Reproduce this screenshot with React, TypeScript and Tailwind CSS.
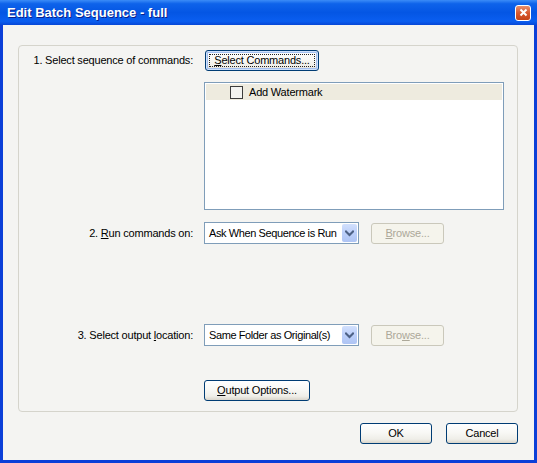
import React from 'react';

const Chevron = () => (
  <svg width="9" height="7" viewBox="0 0 9 7" fill="none">
    <path d="M1 1.5 L4.5 5 L8 1.5" stroke="#4d6185" strokeWidth="2" strokeLinecap="square" />
  </svg>
);

const CloseIcon = () => (
  <svg width="9" height="9" viewBox="0 0 9 9" fill="none">
    <path d="M1.5 1.5 L7.5 7.5 M7.5 1.5 L1.5 7.5" stroke="#ffffff" strokeWidth="2" />
  </svg>
);

const XpButton: React.FC<{ children: React.ReactNode; className?: string; focused?: boolean }> = ({
  children,
  className = '',
  focused = false,
}) => (
  <button
    className={`relative flex h-[21px] items-center justify-center rounded-[3px] border border-[#003c74] bg-[linear-gradient(180deg,#ffffff_0%,#f8f8f5_45%,#efeee8_80%,#d9d5cb_100%)] text-[11px] tracking-[-0.2px] text-black ${
      focused ? 'shadow-[inset_0_0_0_1px_#cee0fb,inset_0_0_0_2px_#a4c0ef]' : ''
    } ${className}`}
  >
    {focused && <span className="absolute inset-[3px] border border-dotted border-[#222]" />}
    <span className="relative">{children}</span>
  </button>
);

const DisabledButton: React.FC<{ children: React.ReactNode }> = ({ children }) => (
  <div className="ml-[12px] flex h-[21px] w-[73px] items-center justify-center rounded-[3px] border border-[#cac8bb] bg-[#f5f4ec] text-[11px] text-[#aca899]">
    {children}
  </div>
);

const Combo: React.FC<{ value: string }> = ({ value }) => (
  <div className="flex h-[22px] w-[155px] items-center border border-[#7f9db9] bg-white">
    <span className="flex-1 overflow-hidden whitespace-nowrap pl-[4px] text-[11px] tracking-[-0.4px] text-black">
      {value}
    </span>
    <span className="m-[1px] flex h-[18px] w-[15px] shrink-0 items-center justify-center rounded-[2px] bg-[linear-gradient(180deg,#d2e0fd_0%,#bccff9_50%,#aec4f4_100%)]">
      <Chevron />
    </span>
  </div>
);

const Label: React.FC<{ children: React.ReactNode }> = ({ children }) => (
  <div className="w-[175px] pr-[1px] text-right text-[11px] text-black">{children}</div>
);

export default function App() {
  return (
    <div className="flex h-[463px] w-[537px] flex-col overflow-hidden bg-[#0b3fd8] font-['Liberation_Sans',Arial,sans-serif] tracking-[-0.2px]">
      {/* title bar */}
      <div className="flex h-[25px] items-center justify-between bg-[linear-gradient(180deg,#3b8cf7_0%,#0e63ea_15%,#0456e4_50%,#0a5ef0_85%,#0747d6_100%)] pl-[7px] pr-[6px]">
        <span className="text-[13px] font-bold tracking-normal text-white [text-shadow:1px_1px_0_#0a1f8a]">
          Edit Batch Sequence - full
        </span>
        <div className="flex h-[16px] w-[16px] items-center justify-center rounded-[3px] border border-white bg-[linear-gradient(180deg,#e8906e_0%,#d8582f_50%,#c54216_100%)]">
          <CloseIcon />
        </div>
      </div>

      {/* body */}
      <div className="mx-[3px] mb-[3px] flex flex-1 flex-col bg-[#f4f4f2]">
        <div className="ml-[15px] mt-[20px] flex h-[367px] w-[500px] flex-col rounded-[4px] border border-[#d5d4cc] pt-[4px]">
          <div className="flex items-center">
            <Label>1. Select sequence of commands:</Label>
            <XpButton focused className="ml-[11px] w-[114px]">
              <u>S</u>elect Commands...
            </XpButton>
          </div>

          <div className="ml-[185px] mt-[11px] h-[128px] w-[300px] border border-[#7f9db9] bg-white p-[1px]">
            <div className="flex h-[16px] items-center bg-[#eeebdf] pl-[24px]">
              <span className="h-[13px] w-[13px] border border-[#3c3c3c] bg-[#f3f3f0]" />
              <span className="ml-[6px] text-[11px] text-black">Add Watermark</span>
            </div>
          </div>

          <div className="mt-[12px] flex items-center">
            <Label>
              2. <u>R</u>un commands on:
            </Label>
            <div className="ml-[10px] flex items-center">
              <Combo value="Ask When Sequence is Run" />
              <DisabledButton>
                <u>B</u>rowse...
              </DisabledButton>
            </div>
          </div>

          <div className="mt-[80px] flex items-center">
            <Label>
              3. Select output <u>l</u>ocation:
            </Label>
            <div className="ml-[10px] flex items-center">
              <Combo value="Same Folder as Original(s)" />
              <DisabledButton>
                Bro<u>w</u>se...
              </DisabledButton>
            </div>
          </div>

          <div className="ml-[185px] mt-[34px]">
            <XpButton className="w-[106px]">
              <u>O</u>utput Options...
            </XpButton>
          </div>
        </div>

        <div className="mt-[11px] flex w-[515px] justify-end gap-[14px]">
          <XpButton className="w-[72px]">OK</XpButton>
          <XpButton className="w-[72px]">Cancel</XpButton>
        </div>
      </div>
    </div>
  );
}
